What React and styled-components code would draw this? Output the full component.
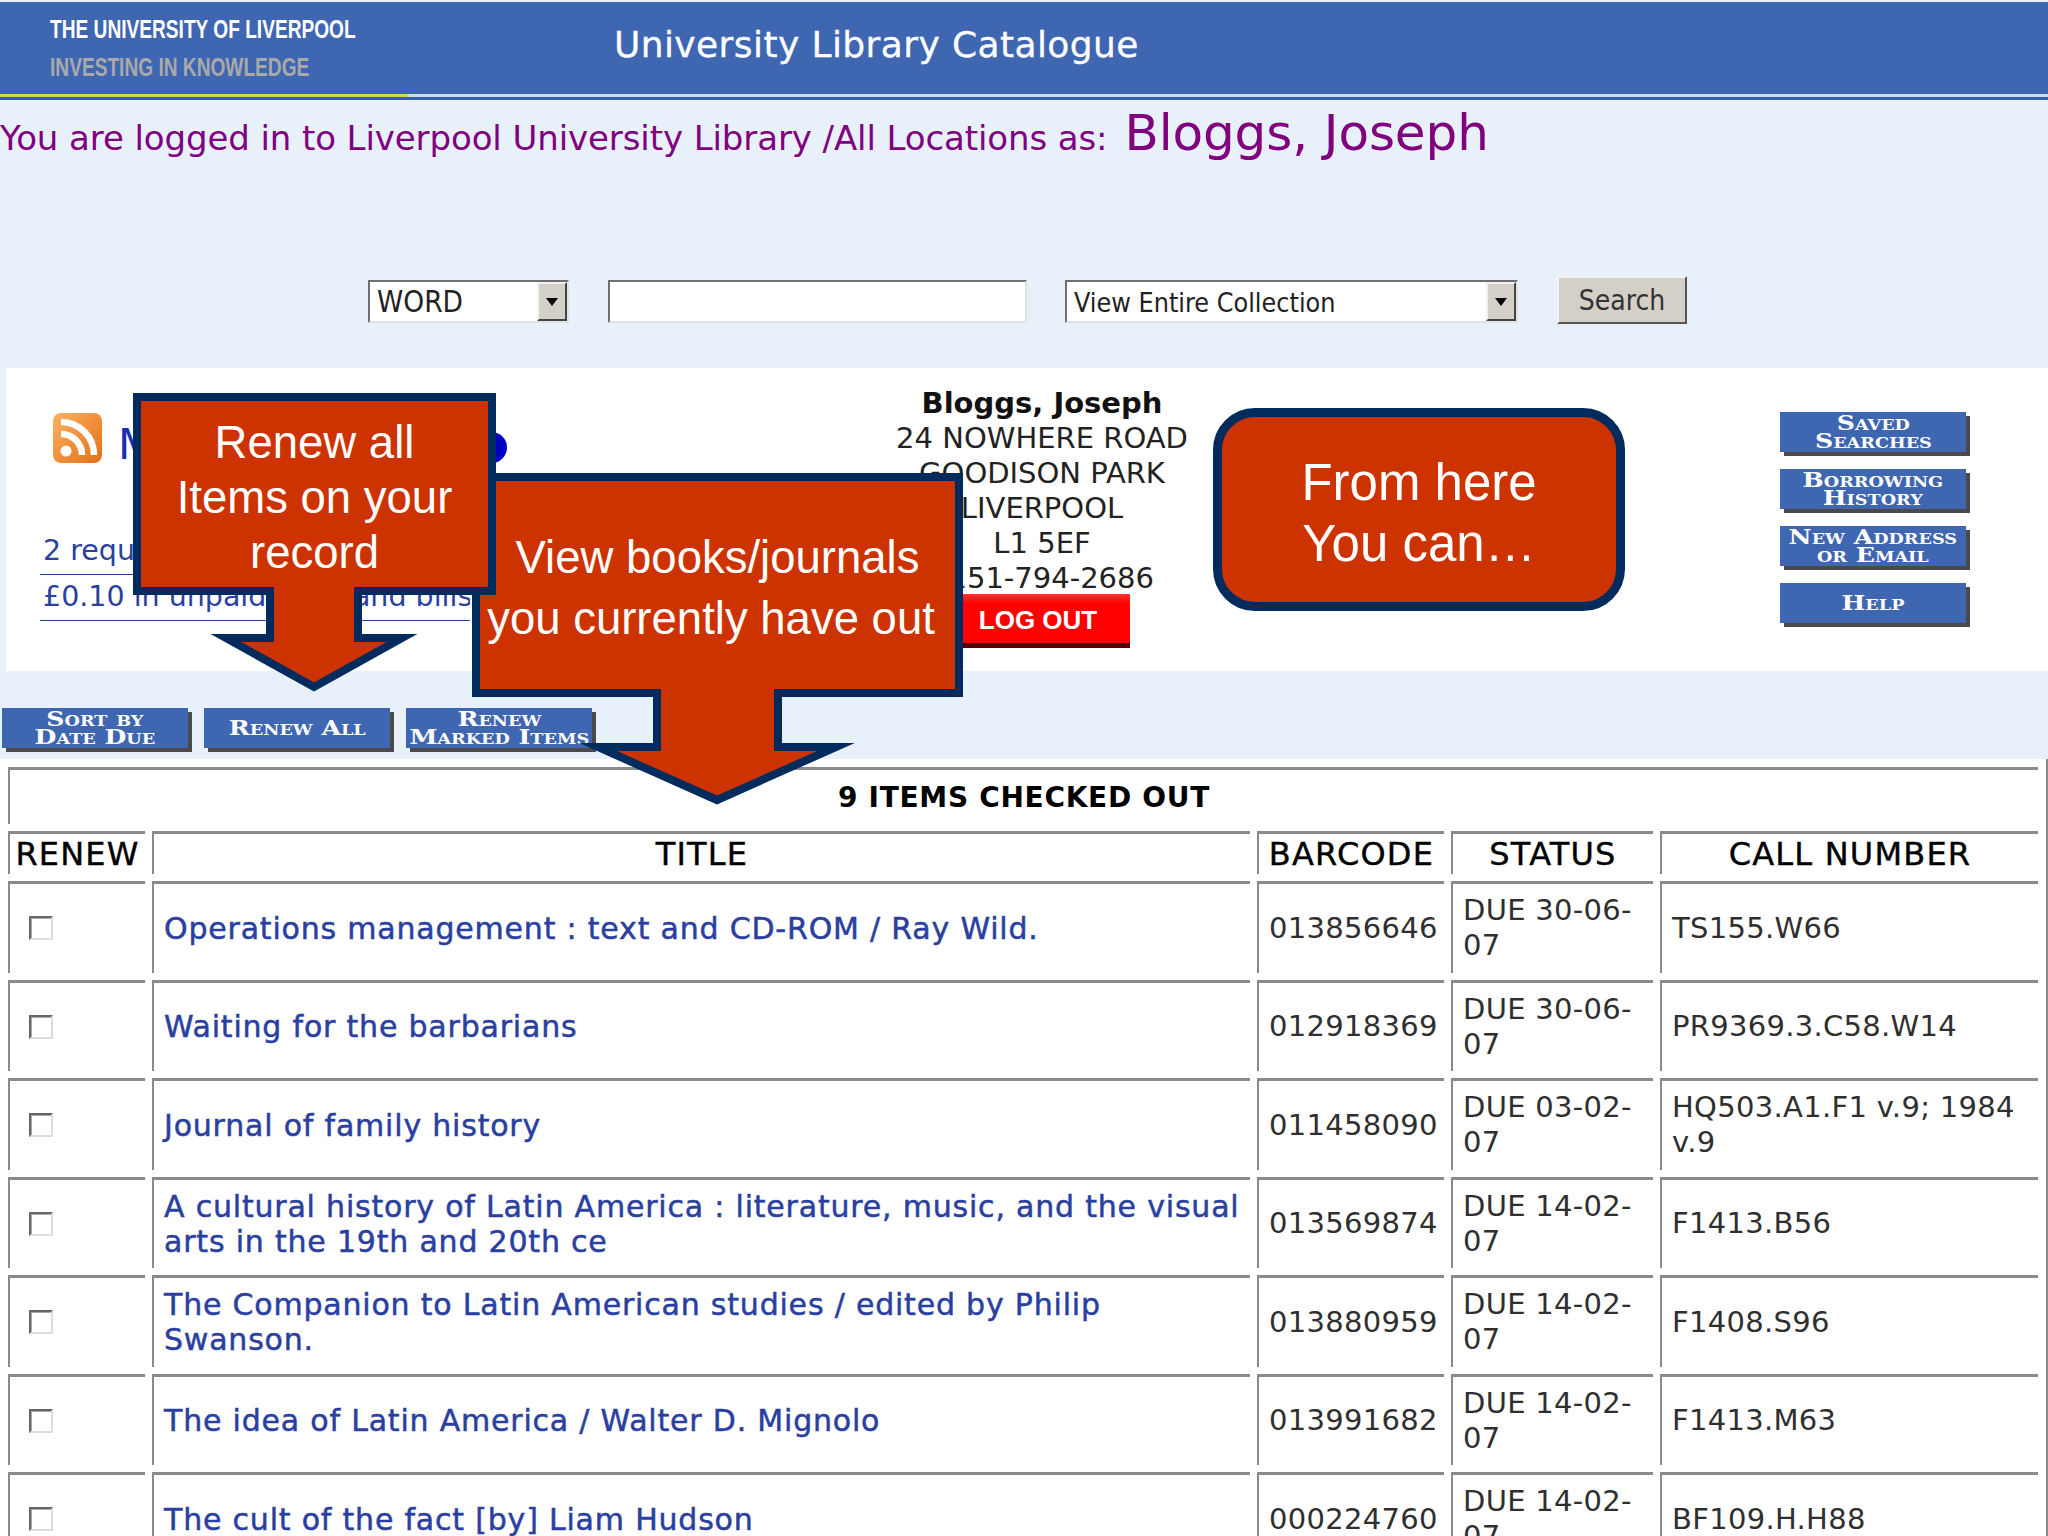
import React from 'react'
import styled, {createGlobalStyle} from 'styled-components'

const colors = {
  page: '#e8f1fa',
  blue: '#3f66b0',
  navy: '#002b5c',
  rust: '#cc3300',
  purple: '#800080',
  link: '#2a3f9f',
  line: '#8a8a8a',
  chrome: '#d4d0c8',
}

const verdana = `"DejaVu Sans", sans-serif`
const tahoma = `"DejaVu Sans Condensed", "DejaVu Sans", sans-serif`
const arial = `"Liberation Sans", Arial, sans-serif`

const GlobalStyle = createGlobalStyle`
  html, body {
    margin: 0;
    height: 1536px;
    overflow: hidden;
    background: ${colors.page};
    font-family: ${verdana};
  }
`

const Page = styled.div`
  position: relative;
  width: 2048px;
  height: 1536px;
  overflow: hidden;
  padding-top: 2px;
  box-sizing: border-box;
`

const Banner = styled.header`
  display: flex;
  height: 92px;
  background: ${colors.blue};
`
const BannerLogo = styled.div`
  display: flex;
  flex-direction: column;
  width: 614px;
  padding: 8px 0 0 50px;
  box-sizing: border-box;
  font-family: ${arial};
  font-weight: 700;
  font-size: 25px;
  line-height: 38px;
`
const LogoLine = styled.div`
  color: ${p => p.$muted ? '#a9a9a9' : '#fff'};
  white-space: nowrap;
  transform: scaleX(0.765);
  transform-origin: left center;
`
const BannerTitle = styled.h1`
  margin: 0;
  font-weight: 400;
  font-size: 36px;
  line-height: 86px;
  letter-spacing: 0.4px;
  color: #fff;
  -webkit-text-stroke: 0.3px #fff;
`
const BannerRule = styled.div`
  height: 3px;
  background: linear-gradient(to right, #d7d845 408px, #c9ddf5 408px);
  border-bottom: 3px solid #3a5fa5;
`

const LoginLine = styled.div`
  display: flex;
  align-items: baseline;
  height: 176px;
  padding-top: 4px;
  box-sizing: border-box;
  color: ${colors.purple};
  font-size: 34px;
  letter-spacing: -0.1px;
  white-space: nowrap;
  gap: 17px;
`
const LoginName = styled.span`
  font-size: 50px;
`

const SearchRow = styled.form`
  display: flex;
  align-items: flex-start;
  height: 92px;
  margin: 0;
  padding-left: 368px;
  box-sizing: border-box;
`
const SelectBox = styled.div`
  display: flex;
  justify-content: space-between;
  align-items: stretch;
  width: ${p => p.$width}px;
  height: 43px;
  margin: 4px ${p => p.$gap}px 0 0;
  box-sizing: border-box;
  background: #fff;
  border: 2px solid;
  border-color: #6f6f6f #e2e2e2 #e2e2e2 #6f6f6f;
  font-family: ${tahoma};
  font-size: ${p => p.$size}px;
  line-height: 41px;
  padding-left: 7px;
  color: #222;
`
const SelectArrow = styled.span`
  display: flex;
  align-items: center;
  justify-content: center;
  width: 30px;
  box-sizing: border-box;
  background: ${colors.chrome};
  border: 2px solid;
  border-color: #f2f2f2 #444 #444 #f2f2f2;
  &::after {
    content: '';
    border: 6px solid transparent;
    border-top: 8px solid #000;
    border-bottom: 0;
  }
`
const TextInput = styled.div`
  width: 419px;
  height: 43px;
  margin: 4px 38px 0 0;
  box-sizing: border-box;
  background: #fff;
  border: 2px solid;
  border-color: #6f6f6f #e2e2e2 #e2e2e2 #6f6f6f;
`
const SearchButton = styled.button`
  width: 130px;
  height: 48px;
  margin-left: 39px;
  padding: 0;
  box-sizing: border-box;
  background: ${colors.chrome};
  border: 2px solid;
  border-color: #f4f4f4 #555 #555 #f4f4f4;
  font-family: ${tahoma};
  font-size: 28px;
  color: #333;
`

const AccountPanel = styled.section`
  display: flex;
  height: 303px;
  margin-left: 6px;
  background: #fff;
`
const AccountLeft = styled.div`
  width: 894px;
  padding: 45px 0 0 34px;
  box-sizing: border-box;
`
const FeedTitle = styled.div`
  display: flex;
  align-items: flex-end;
  width: 454px;
  margin-left: 13px;
  height: 50px;
  gap: 16px;
`
const FeedLabel = styled.span`
  color: #1a2fb0;
  font-size: 42px;
  line-height: 36px;
`
const FeedDot = styled.span`
  width: 31px;
  height: 31px;
  margin-left: auto;
  border-radius: 50%;
  background: #0000c0;
`
const NoticeList = styled.div`
  margin-top: 66px;
  width: 430px;
`
const Notice = styled.a`
  display: block;
  height: 45px;
  padding-left: 3px;
  border-bottom: 1px solid ${colors.link};
  color: ${colors.link};
  font-size: 28.5px;
  line-height: 44px;
  white-space: nowrap;
  overflow: hidden;
`
const AddressBlock = styled.address`
  display: flex;
  flex-direction: column;
  align-items: center;
  width: 284px;
  padding-top: 18px;
  font-style: normal;
  font-size: 29px;
  line-height: 35px;
  color: #222;
  white-space: nowrap;
`
const AddressName = styled.strong`
  color: #111;
`
const LogOut = styled.div`
  width: 176px;
  height: 54px;
  margin-top: -2px;
  padding: 1px 8px 0 0;
  box-sizing: border-box;
  background: linear-gradient(#f33, #f00 20%);
  border-bottom: 5px solid #500;
  color: #fff;
  font-family: ${arial};
  font-weight: 700;
  font-size: 26px;
  line-height: 50px;
  text-align: center;
`
const SideMenu = styled.nav`
  display: flex;
  flex-direction: column;
  gap: 17px;
  margin-left: auto;
  margin-right: 82px;
  padding-top: 44px;
`
const ActionButton = styled.a`
  display: flex;
  align-items: center;
  justify-content: center;
  width: 186px;
  height: 40px;
  background: ${colors.blue};
  box-shadow: 4px 4px 0 #4a4a4a;
  color: #fff;
  font-family: "DejaVu Serif", ${verdana};
  font-weight: 700;
  font-variant: small-caps;
  font-size: 20px;
  line-height: 18px;
  text-align: center;
  white-space: nowrap;
`
const ActionLabel = styled.span`
  display: block;
  transform: scaleX(1.26);
`

const ActionBand = styled.div`
  display: flex;
  gap: 16px;
  height: 88px;
  padding: 37px 0 0 2px;
  box-sizing: border-box;
`

const TableSection = styled.section`
  height: 777px;
  padding: 8px 0 0 8px;
  box-sizing: border-box;
  background: #fff;
  border-right: 2px solid ${colors.line};
`
const Rows = styled.div`
  display: flex;
  flex-direction: column;
  gap: 7px;
  width: 2030px;
`
const Row = styled.div`
  display: grid;
  grid-template-columns: 137px 1098px 187px 202px 378px;
  gap: 7px;
  height: ${p => p.$height}px;
`
const Cell = styled.div`
  display: flex;
  align-items: center;
  justify-content: ${p => p.$center ? 'center' : 'flex-start'};
  grid-column: ${p => p.$span || 'auto'};
  min-width: 0;
  padding: 0 8px 0 ${p => p.$center ? 0 : 10}px;
  box-sizing: border-box;
  border-top: 3px solid ${colors.line};
  border-left: 2px solid ${colors.line};
  font-size: 29px;
  line-height: 35px;
  letter-spacing: 0.3px;
  color: #2f2f2f;
`
const HeadCell = styled(Cell)`
  padding: 0;
  color: #000;
  font-size: 32px;
  letter-spacing: 1.2px;
  -webkit-text-stroke: 0.4px #000;
`
const CaptionCell = styled(HeadCell)`
  font-weight: 700;
  font-size: 28px;
  letter-spacing: 0.7px;
  -webkit-text-stroke: 0;
`
const TitleCell = styled(Cell)`
  padding-right: 0;
`
const TitleLink = styled.a`
  color: ${colors.link};
  font-size: 30px;
  letter-spacing: 0.8px;
  -webkit-text-stroke: 0.5px ${colors.link};
`
const RenewBox = styled.span`
  display: block;
  width: 24px;
  height: 24px;
  margin-left: 9px;
  box-sizing: border-box;
  border: 2px solid;
  border-color: #666 #ddd #ddd #666;
  box-shadow: inset 1px 1px 0 #aaa;
`

const Callout = styled.div`
  position: absolute;
  left: ${p => p.$left}px;
  top: ${p => p.$top}px;
  width: ${p => p.$width}px;
  color: #fff;
  font-family: ${arial};
  font-size: 45.5px;
  line-height: ${p => p.$lineHeight}px;
  text-align: center;
  white-space: nowrap;
`
const CalloutShape = styled.svg`
  position: absolute;
  left: 0;
  top: 0;
  overflow: visible;
`
const CalloutText = styled.div`
  position: relative;
  padding-top: ${p => p.$top}px;
`
const CalloutLine = styled.span`
  display: block;
  margin-left: ${p => p.$shift || 0}px;
`
const RoundCallout = styled.div`
  position: absolute;
  left: 1213px;
  top: 408px;
  display: flex;
  align-items: center;
  justify-content: center;
  width: 412px;
  height: 203px;
  padding-top: 7px;
  box-sizing: border-box;
  background: ${colors.rust};
  border: 9px solid ${colors.navy};
  border-radius: 42px;
  color: #fff;
  font-family: ${arial};
  font-size: 51px;
  line-height: 61px;
  text-align: center;
`

const RssIcon = () => (
  <svg width="49" height="50" viewBox="0 0 49 50">
    <defs>
      <linearGradient id="rssFill" x1="0" y1="0" x2="1" y2="1">
        <stop offset="0" stopColor="#fbb163" />
        <stop offset="1" stopColor="#e66f16" />
      </linearGradient>
    </defs>
    <rect width="49" height="50" rx="8" fill="url(#rssFill)" />
    <circle cx="13" cy="38" r="5.5" fill="#fff" />
    <path d="M8 21a21 21 0 0 1 21 21" fill="none" stroke="#fff" strokeWidth="6.5" />
    <path d="M8 9a33 33 0 0 1 33 33" fill="none" stroke="#fff" strokeWidth="6.5" />
  </svg>
)

const loans = [
  {title: 'Operations management : text and CD-ROM / Ray Wild.', barcode: '013856646', due: 'DUE 30-06-07', call: 'TS155.W66'},
  {title: 'Waiting for the barbarians', barcode: '012918369', due: 'DUE 30-06-07', call: 'PR9369.3.C58.W14'},
  {title: 'Journal of family history', barcode: '011458090', due: 'DUE 03-02-07', call: 'HQ503.A1.F1 v.9; 1984 v.9'},
  {title: 'A cultural history of Latin America : literature, music, and the visual arts in the 19th and 20th ce', barcode: '013569874', due: 'DUE 14-02-07', call: 'F1413.B56'},
  {title: 'The Companion to Latin American studies / edited by Philip Swanson.', barcode: '013880959', due: 'DUE 14-02-07', call: 'F1408.S96'},
  {title: 'The idea of Latin America / Walter D. Mignolo', barcode: '013991682', due: 'DUE 14-02-07', call: 'F1413.M63'},
  {title: 'The cult of the fact [by] Liam Hudson', barcode: '000224760', due: 'DUE 14-02-07', call: 'BF109.H.H88'},
]

export default function App() {
  return (
    <Page>
      <GlobalStyle />
      <Banner>
        <BannerLogo>
          <LogoLine>THE UNIVERSITY OF LIVERPOOL</LogoLine>
          <LogoLine $muted>INVESTING IN KNOWLEDGE</LogoLine>
        </BannerLogo>
        <BannerTitle>University Library Catalogue</BannerTitle>
      </Banner>
      <BannerRule />

      <LoginLine>
        You are logged in to Liverpool University Library /All Locations as:
        <LoginName>Bloggs, Joseph</LoginName>
      </LoginLine>

      <SearchRow>
        <SelectBox $width={201} $size={29.5} $gap={39}>WORD<SelectArrow /></SelectBox>
        <TextInput />
        <SelectBox $width={453} $size={26.7} $gap={0}>View Entire Collection<SelectArrow /></SelectBox>
        <SearchButton type="button">Search</SearchButton>
      </SearchRow>

      <AccountPanel>
        <AccountLeft>
          <FeedTitle>
            <RssIcon />
            <FeedLabel>My Account</FeedLabel>
            <FeedDot />
          </FeedTitle>
          <NoticeList>
            <Notice>2 requests</Notice>
            <Notice>£0.10 in unpaid fines and bills</Notice>
          </NoticeList>
        </AccountLeft>
        <AddressBlock>
          <AddressName>Bloggs, Joseph</AddressName>
          <span>24 NOWHERE ROAD</span>
          <span>GOODISON PARK</span>
          <span>LIVERPOOL</span>
          <span>L1 5EF</span>
          <span>0151-794-2686</span>
          <LogOut>LOG OUT</LogOut>
        </AddressBlock>
        <SideMenu>
          <ActionButton><ActionLabel>Saved<br />Searches</ActionLabel></ActionButton>
          <ActionButton><ActionLabel>Borrowing<br />History</ActionLabel></ActionButton>
          <ActionButton><ActionLabel>New Address<br />or Email</ActionLabel></ActionButton>
          <ActionButton><ActionLabel>Help</ActionLabel></ActionButton>
        </SideMenu>
      </AccountPanel>

      <ActionBand>
        <ActionButton><ActionLabel>Sort by<br />Date Due</ActionLabel></ActionButton>
        <ActionButton><ActionLabel>Renew All</ActionLabel></ActionButton>
        <ActionButton><ActionLabel>Renew<br />Marked Items</ActionLabel></ActionButton>
      </ActionBand>

      <TableSection>
        <Rows>
          <Row $height={57}>
            <CaptionCell $center $span="1 / -1">9 ITEMS CHECKED OUT</CaptionCell>
          </Row>
          <Row $height={43}>
            <HeadCell $center>RENEW</HeadCell>
            <HeadCell $center>TITLE</HeadCell>
            <HeadCell $center>BARCODE</HeadCell>
            <HeadCell $center>STATUS</HeadCell>
            <HeadCell $center>CALL NUMBER</HeadCell>
          </Row>
          {loans.map(loan => (
            <Row $height={91.5} key={loan.barcode}>
              <Cell><RenewBox /></Cell>
              <TitleCell><TitleLink>{loan.title}</TitleLink></TitleCell>
              <Cell>{loan.barcode}</Cell>
              <Cell>{loan.due}</Cell>
              <Cell>{loan.call}</Cell>
            </Row>
          ))}
        </Rows>
      </TableSection>

      <Callout $left={472} $top={473} $width={491} $lineHeight={61}>
        <CalloutShape width="491" height="332" viewBox="472 473 491 332">
          <polygon
            points="476,477 959,477 959,693 778,693 778,747 836,747 717,800 598,747 657,747 657,693 476,693"
            fill={colors.rust}
            stroke={colors.navy}
            strokeWidth="8"
            strokeMiterlimit="10"
          />
        </CalloutShape>
        <CalloutText $top={54}>
          <CalloutLine>View books/journals</CalloutLine>
          <CalloutLine $shift={-13}>you currently have out</CalloutLine>
        </CalloutText>
      </Callout>

      <Callout $left={133} $top={393} $width={363} $lineHeight={55}>
        <CalloutShape width="363" height="300" viewBox="133 393 363 300">
          <polygon
            points="137,397 492,397 492,591 358,591 358,638 402,638 314,687 226,638 270,638 270,591 137,591"
            fill={colors.rust}
            stroke={colors.navy}
            strokeWidth="8"
            strokeMiterlimit="10"
          />
        </CalloutShape>
        <CalloutText $top={22}>
          <CalloutLine>Renew all</CalloutLine>
          <CalloutLine>Items on your</CalloutLine>
          <CalloutLine>record</CalloutLine>
        </CalloutText>
      </Callout>

      <RoundCallout>From here<br />You can…</RoundCallout>
    </Page>
  )
}
